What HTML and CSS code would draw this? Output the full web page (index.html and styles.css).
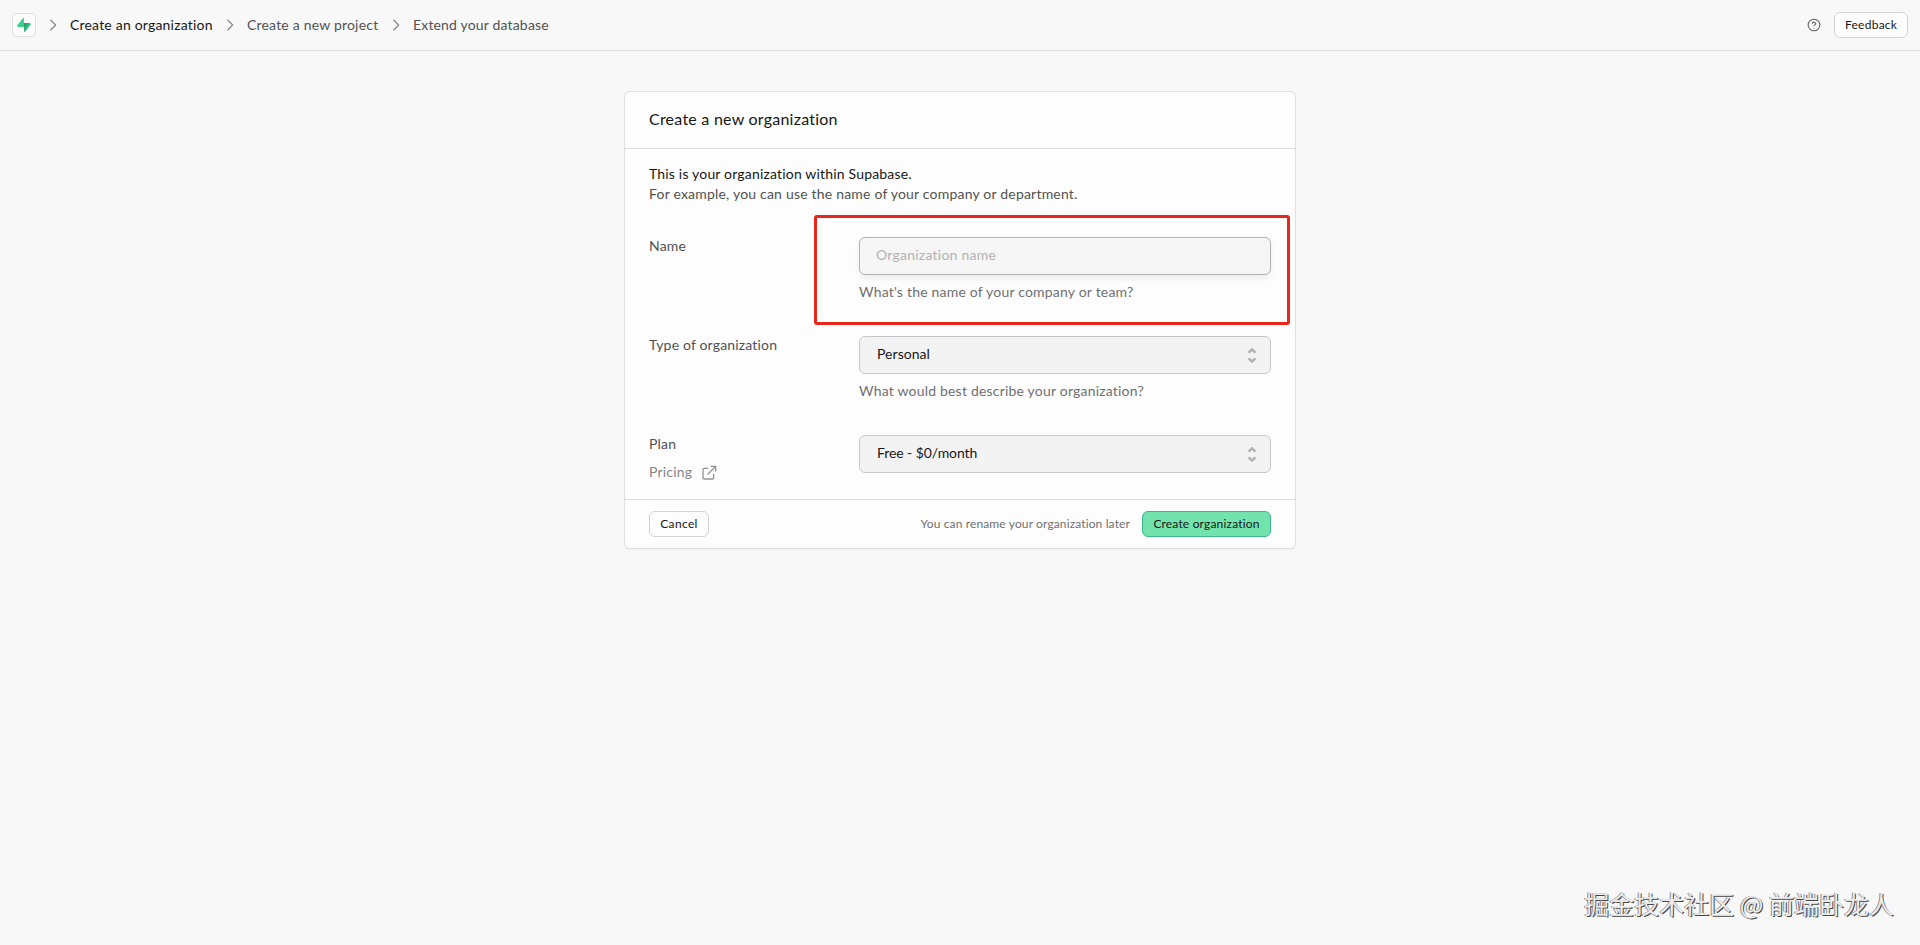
FILE: index.html
```html
<!DOCTYPE html>
<html lang="en">
<head>
<meta charset="utf-8">
<title>Create a new organization</title>
<link rel="stylesheet" href="styles.css">
</head>
<body>
<header class="topbar">
  <nav class="crumbs">
    <a class="logo" aria-label="Home">
      <svg width="14" height="14" viewBox="0 0 109 113" fill="none">
        <defs>
          <linearGradient id="g" x1="54" y1="54" x2="94" y2="72" gradientUnits="userSpaceOnUse"><stop stop-color="#249361"/><stop offset="1" stop-color="#3ecf8e"/></linearGradient>
        </defs>
        <path d="M63.7 110.3c-2.9 3.6-8.7 1.6-8.7-3L54 40.1h45.2c8.2 0 12.8 9.4 7.7 15.9z" fill="url(#g)"/>
        <path d="M45.3 2.1c2.9-3.6 8.7-1.6 8.7 3l.4 67.2H9.8c-8.2 0-12.7-9.5-7.6-15.9z" fill="#3ecf8e"/>
      </svg>
    </a>
    <svg class="chev" width="16" height="16" viewBox="0 0 24 24"><path d="M8.500 4.500 16 12l-7.500 7.500"/></svg>
    <span class="crumb current">Create an organization</span>
    <svg class="chev" width="16" height="16" viewBox="0 0 24 24"><path d="M8.500 4.500 16 12l-7.500 7.500"/></svg>
    <span class="crumb project">Create a new project</span>
    <svg class="chev" width="16" height="16" viewBox="0 0 24 24"><path d="M8.500 4.500 16 12l-7.500 7.500"/></svg>
    <span class="crumb">Extend your database</span>
  </nav>
  <div class="actions">
    <svg class="help" width="14" height="14" viewBox="0 0 24 24"><circle cx="12" cy="12" r="10"/><path d="M9.100 9a3 3 0 0 1 5.800 1c0 2-3 3-3 3M12 17h.010"/></svg>
    <button class="btn">Feedback</button>
  </div>
</header>

<main class="page">
  <section class="card">
    <div class="card-head"><h1>Create a new organization</h1></div>
    <div class="card-body">
      <div class="intro">
        <p class="strong">This is your organization within Supabase.</p>
        <p>For example, you can use the name of your company or department.</p>
      </div>
      <div class="row">
        <label>Name</label>
        <div class="field">
          <input class="control name" type="text" placeholder="Organization name">
          <p class="hint">What's the name of your company or team?</p>
          <div class="highlight"></div>
        </div>
      </div>
      <div class="row">
        <label>Type of organization</label>
        <div class="field">
          <div class="control select"><span>Personal</span>
            <svg class="updown" width="20" height="20" viewBox="0 0 20 20"><path d="m6.500 7.700 3.500-3.200 3.500 3.200M6.500 13.300l3.500 3.200 3.500-3.200"/></svg></div>
          <p class="hint">What would best describe your organization?</p>
        </div>
      </div>
      <div class="row last">
        <div class="labels">
          <label>Plan</label>
          <a class="pricing">Pricing
            <svg width="16" height="16" viewBox="0 0 24 24"><path d="M10 5H5a2 2 0 0 0-2 2v12a2 2 0 0 0 2 2h12a2 2 0 0 0 2-2v-5M15 2h7v7M10.500 13.500 21.500 2.500"/></svg></a>
        </div>
        <div class="field">
          <div class="control select plan"><span>Free - $0/month</span>
            <svg class="updown" width="20" height="20" viewBox="0 0 20 20"><path d="m6.500 7.700 3.500-3.200 3.500 3.200M6.500 13.300l3.500 3.200 3.500-3.200"/></svg></div>
        </div>
      </div>
    </div>
    <footer class="card-foot">
      <button class="btn cancel">Cancel</button>
      <div class="submit">
        <span class="note">You can rename your organization later</span>
        <button class="btn primary">Create organization</button>
      </div>
    </footer>
  </section>
</main>
<div class="watermark">掘金技术社区 @ 前端卧龙人</div>
</body>
</html>
```
FILE: styles.css
```css
* { box-sizing: border-box; }
body {
  margin: 0;
  min-height: 945px;
  background: #f8f8f8;
  color: #525252;
  font: 14px/20px Lato, "Noto Sans CJK SC", sans-serif;
  letter-spacing: .2px;
}
p, h1 { margin: 0; }
svg { display: block; flex: none; fill: none; stroke-linecap: round; stroke-linejoin: round; }

.topbar {
  display: flex;
  align-items: center;
  justify-content: space-between;
  height: 51px;
  padding: 0 12px;
  border-bottom: 1px solid #dfdfdf;
}
.crumbs { display: flex; align-items: center; }
.logo {
  display: grid;
  place-items: center;
  width: 24px;
  height: 24px;
  border: 1px solid #dfdfdf;
  border-radius: 4px;
  background: #fcfcfc;
}
.chev { margin: 0 9px; stroke: #858585; stroke-width: 1.7; }
.crumb { width: 136px; padding-bottom: 1px; white-space: nowrap; letter-spacing: .17px; }
.crumb.current { width: 143px; color: #171717; letter-spacing: .2px; }
.crumb.project { width: 132px; letter-spacing: .2px; }
.actions { display: flex; align-items: center; gap: 13px; }
.help { stroke: #606060; stroke-width: 1.8; }

.btn {
  height: 26px;
  padding: 0 10px;
  border: 1px solid #d2d2d2;
  border-radius: 6px;
  background: #fdfdfd;
  color: #171717;
  font: 12px/16px Lato, sans-serif;
  letter-spacing: .25px;
  white-space: nowrap;
}
.actions .btn { width: 74px; }
.btn.cancel { width: 60px; letter-spacing: .35px; }
.btn.primary { width: 129px; background: #72e3ad; border-color: #3eb489; letter-spacing: .18px; }

.page { display: flex; justify-content: center; padding-top: 40px; }
.card {
  width: 672px;
  height: 458px;
  display: flex;
  flex-direction: column;
  border: 1px solid #dfdfdf;
  border-radius: 6px;
  background: #fdfdfd;
  box-shadow: 0 1px 2px rgba(0, 0, 0, .04);
}
.card-head { height: 57px; padding: 15px 24px; border-bottom: 1px solid #dfdfdf; }
h1 { font-size: 16px; line-height: 24px; font-weight: 400; color: #171717; letter-spacing: .24px; }
.card-body { flex: 1; padding: 15px 24px 0; }
.intro { margin-bottom: 33px; }
.strong { color: #171717; letter-spacing: .18px; }
.row { display: grid; grid-template-columns: 210px 412px; height: 99px; }
.row.last { height: 62px; }
.row label { display: block; margin-top: -1px; letter-spacing: .17px; }
.field { position: relative; }
.control {
  display: flex;
  align-items: center;
  justify-content: space-between;
  width: 100%;
  height: 38px;
  padding: 0 8px 0 17px;
  border: 1px solid #c7c7c7;
  border-radius: 6px;
  background: #f3f3f3;
  color: #171717;
  font: inherit;
  letter-spacing: .05px;
}
.control span { padding-bottom: 2px; }
.control.name {
  padding: 0 16px 3px;
  border-color: #b2b2b2;
  background: #f6f6f6;
  letter-spacing: .24px;
  box-shadow: 0 3px 6px rgba(0, 0, 0, .08);
}
.control.name::placeholder { color: #b2b2b2; opacity: 1; }
.control.plan { letter-spacing: -.08px; }
.updown { stroke: #b2b2b2; stroke-width: 2.4; stroke-linecap: butt; stroke-linejoin: miter; }
.hint { margin-top: 7px; color: #707070; }
.highlight {
  position: absolute;
  top: -22px;
  left: -45px;
  width: 476px;
  height: 110px;
  border: 3px solid #e8261c;
  border-radius: 3px;
  pointer-events: none;
}
.pricing { display: flex; align-items: center; gap: 9px; margin-top: 8px; color: #858585; }
.pricing svg { margin-top: 1px; stroke: #909090; stroke-width: 1.9; }
.card-foot {
  display: flex;
  align-items: center;
  justify-content: space-between;
  height: 49px;
  padding: 0 24px;
  border-top: 1px solid #dfdfdf;
}
.submit { display: flex; align-items: center; gap: 12px; }
.note { font-size: 12px; line-height: 16px; color: #707070; letter-spacing: .13px; }

.watermark {
  position: absolute;
  right: 26px;
  bottom: 24px;
  color: #ececec;
  font: 25px/36px "Noto Sans CJK SC", sans-serif;
  letter-spacing: 0;
  text-shadow: -1px 0 0 #8a8a8a, 1px 1px 0 #444;
  white-space: nowrap;
}
```
